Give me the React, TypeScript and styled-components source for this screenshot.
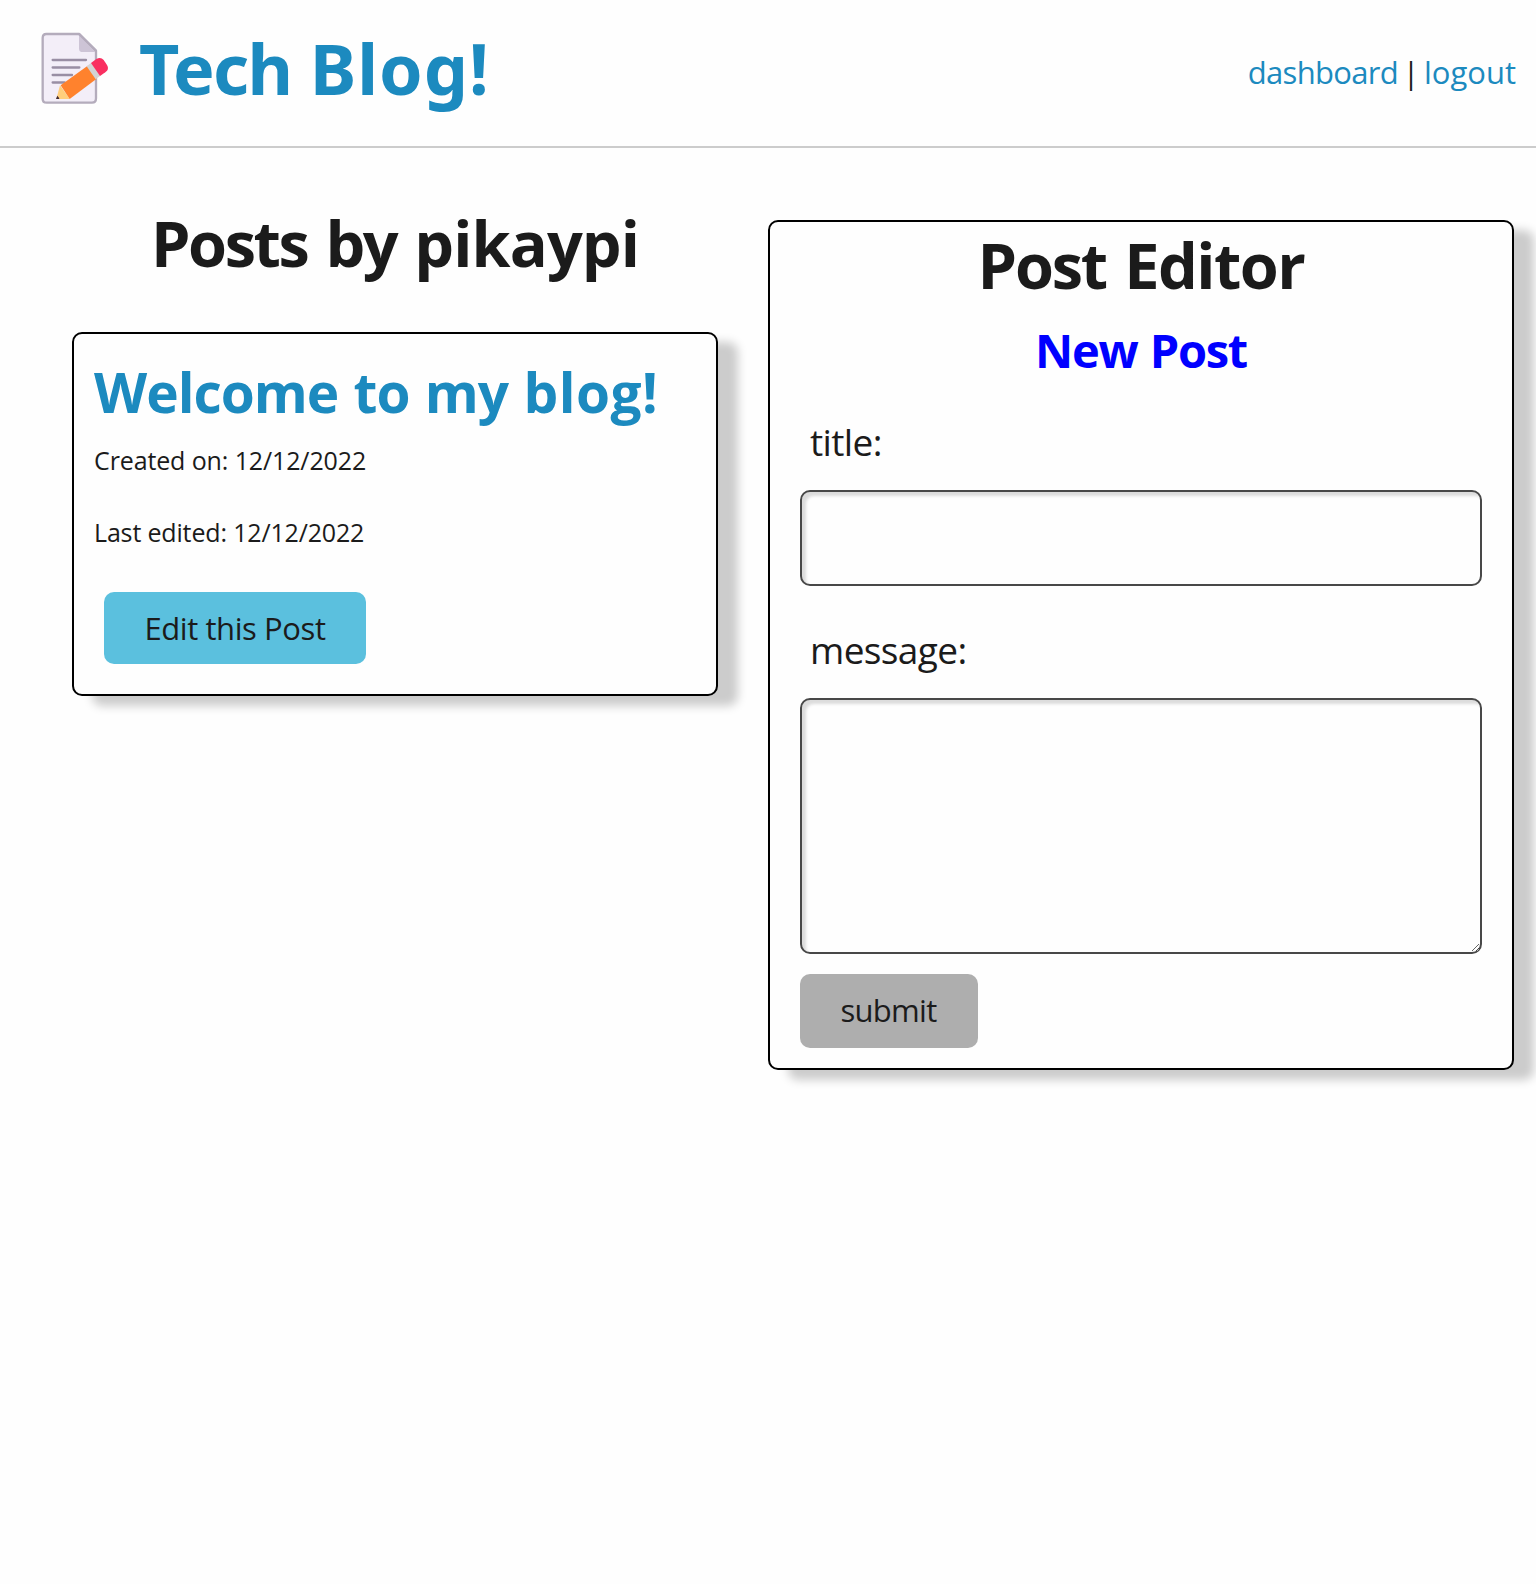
import React from "react";
import styled, { createGlobalStyle } from "styled-components";

const GlobalStyle = createGlobalStyle`
  *, *::before, *::after {
    box-sizing: border-box;
  }

  body {
    margin: 0;
    background: #fefefe;
    color: #1b1b1b;
    font-family: "Open Sans", "Noto Sans", sans-serif;
    font-size: 31px;
    font-weight: 370;
  }

  h1, h2, h3, p {
    margin: 0;
  }
`;

const Page = styled.div`
  min-height: 1584px;
  overflow: hidden;
`;

const Header = styled.header`
  display: flex;
  justify-content: space-between;
  height: 148px;
  padding: 0 20px 0 40px;
  border-bottom: 2px solid #cccccc;
`;

const Brand = styled.div`
  display: flex;
  align-items: center;
  gap: 29px;
  height: 136px;
`;

const BrandIcon = styled.svg`
  flex: none;
  width: 70px;
  height: 75px;
  margin-bottom: 1px;
`;

const SiteTitle = styled.h1`
  color: #1c8abf;
  font-family: "Noto Sans", "Open Sans", sans-serif;
  font-size: 70px;
  line-height: 136px;
  white-space: nowrap;
`;

const TitleWord = styled.span<{ $tracking: number }>`
  letter-spacing: ${(p) => p.$tracking}px;
`;

const Nav = styled.nav`
  display: flex;
  gap: 9px;
  height: 144px;
  line-height: 144px;
  white-space: nowrap;
`;

const NavLink = styled.a<{ $tracking: number }>`
  color: #1c8abf;
  text-decoration: none;
  letter-spacing: ${(p) => p.$tracking}px;
`;

const Divider = styled.span`
  display: flex;
  justify-content: center;
  width: 8px;
`;

const Main = styled.main`
  display: grid;
  grid-template-columns: 646px 746px;
  align-items: start;
  gap: 50px;
  padding: 52px 22px 0 72px;
`;

const PostsColumn = styled.section`
  display: flex;
  flex-direction: column;
  gap: 48px;
`;

const SectionTitle = styled.h2`
  height: 84px;
  font-size: 63px;
  line-height: 86px;
  word-spacing: 4px;
  text-align: center;
  white-space: nowrap;
`;

const Panel = styled.article`
  background: #fefefe;
  border: 2px solid #000000;
  border-radius: 10px;
  box-shadow: 20px 10px 10px #cccccc;
`;

const PostCard = styled(Panel)`
  display: flex;
  flex-direction: column;
  align-items: flex-start;
  padding: 20px 20px 30px;
`;

const PostTitle = styled.h2`
  height: 74px;
  margin-bottom: 14px;
  color: #1c8abf;
  font-size: 55px;
  line-height: 76px;
  word-spacing: 2px;
  white-space: nowrap;
`;

const PostMeta = styled.p<{ $tracking: number }>`
  margin-bottom: 36px;
  font-size: 25px;
  line-height: 36px;
  letter-spacing: ${(p) => p.$tracking}px;
`;

const Button = styled.button`
  border: 0;
  border-radius: 10px;
  color: #1b1b1b;
  font: inherit;
  white-space: nowrap;
`;

const EditButton = styled(Button)`
  width: 262px;
  height: 72px;
  margin: 6px 0 0 10px;
  padding: 0 0 1px;
  background: #5bc0de;
  letter-spacing: -0.42px;
`;

const Editor = styled(Panel)`
  display: flex;
  flex-direction: column;
  margin-top: 20px;
  padding: 0 30px 20px;
`;

const EditorMode = styled.h3`
  margin: 12px 0 34px;
  color: #0000ff;
  font-size: 47px;
  line-height: 64px;
  letter-spacing: -1.3px;
  word-spacing: 1.5px;
  text-align: center;
`;

const Field = styled.div`
  display: flex;
  flex-direction: column;
  gap: 22px;

  & + & {
    margin-top: 38px;
  }
`;

const FieldLabel = styled.label`
  padding-left: 10px;
  font-size: 37px;
  line-height: 52px;
  letter-spacing: -0.62px;
`;

const Control = styled.input`
  display: block;
  width: 100%;
  height: 96px;
  padding: 10px;
  border: 2px solid #484848;
  border-radius: 10px;
  outline: 0;
  background: #fefefe;
  box-shadow: inset 4px 4px 3px #dcdcdc;
  font: inherit;
`;

const MessageBox = styled(Control)`
  height: 256px;
  resize: vertical;
`;

const SubmitButton = styled(Button)`
  width: 178px;
  height: 74px;
  margin-top: 20px;
  padding: 0 1px 2px 0;
  background: #aeaeae;
  letter-spacing: -0.7px;
`;

function MemoIcon() {
  return (
    <BrandIcon viewBox="30 30 210 225" aria-hidden="true">
      <path
        d="M49 42H148L198 92V235Q198 248 186 248H50Q38 248 38 236V54Q38 42 49 42Z"
        fill="#f3eef8"
        stroke="#b4acbc"
        strokeWidth="7"
        strokeLinejoin="round"
      />
      <path d="M147 46L196 96H158Q147 96 147 86Z" fill="#cdc4d6" />
      <path d="M147 42L198 93" stroke="#b4acbc" strokeWidth="7" />
      <path
        d="M68 120H168M68 142.5H148M68 165H126M68 187.5H104"
        stroke="#998ea4"
        strokeWidth="7"
        strokeLinecap="round"
      />
      <path d="M90 196L119 237H79Z" fill="#ffce7c" />
      <path d="M82 227L88 235L87 237H78Z" fill="#402a32" />
      <path d="M92 196L173 137L200 176L119 237Z" fill="#ff822d" />
      <path d="M170 139L184 128L211 167L197 178Z" fill="#d3d3d3" />
      <path
        d="M183 129L199 117Q212 109 221 120L231 135Q239 148 226 157L210 168Z"
        fill="#f92f60"
      />
    </BrandIcon>
  );
}

export default function App() {
  return (
    <>
      <GlobalStyle />
      <Page>
        <Header>
          <Brand>
            <MemoIcon />
            <SiteTitle>
              <TitleWord $tracking={-1.6}>Tech</TitleWord>{" "}
              <TitleWord $tracking={1}>Blog!</TitleWord>
            </SiteTitle>
          </Brand>
          <Nav>
            <NavLink $tracking={-0.7}>dashboard</NavLink>
            <Divider>|</Divider>
            <NavLink $tracking={0}>logout</NavLink>
          </Nav>
        </Header>
        <Main>
          <PostsColumn>
            <SectionTitle>
              <TitleWord $tracking={-2.4}>Posts by </TitleWord>
              <TitleWord $tracking={-0.9}>pikaypi</TitleWord>
            </SectionTitle>
            <PostCard>
              <PostTitle>
                <TitleWord $tracking={-1}>Welcome to my </TitleWord>
                <TitleWord $tracking={0.5}>blog!</TitleWord>
              </PostTitle>
              <PostMeta $tracking={-0.12}>Created on: 12/12/2022</PostMeta>
              <PostMeta $tracking={-0.16}>Last edited: 12/12/2022</PostMeta>
              <EditButton type="button">Edit this Post</EditButton>
            </PostCard>
          </PostsColumn>
          <Editor as="form">
            <SectionTitle>
              <TitleWord $tracking={-2.2}>Post </TitleWord>
              <TitleWord $tracking={-1.5}>Editor</TitleWord>
            </SectionTitle>
            <EditorMode>New Post</EditorMode>
            <Field>
              <FieldLabel htmlFor="title">title:</FieldLabel>
              <Control id="title" />
            </Field>
            <Field>
              <FieldLabel htmlFor="message">message:</FieldLabel>
              <MessageBox as="textarea" id="message" />
            </Field>
            <SubmitButton type="button">submit</SubmitButton>
          </Editor>
        </Main>
      </Page>
    </>
  );
}
